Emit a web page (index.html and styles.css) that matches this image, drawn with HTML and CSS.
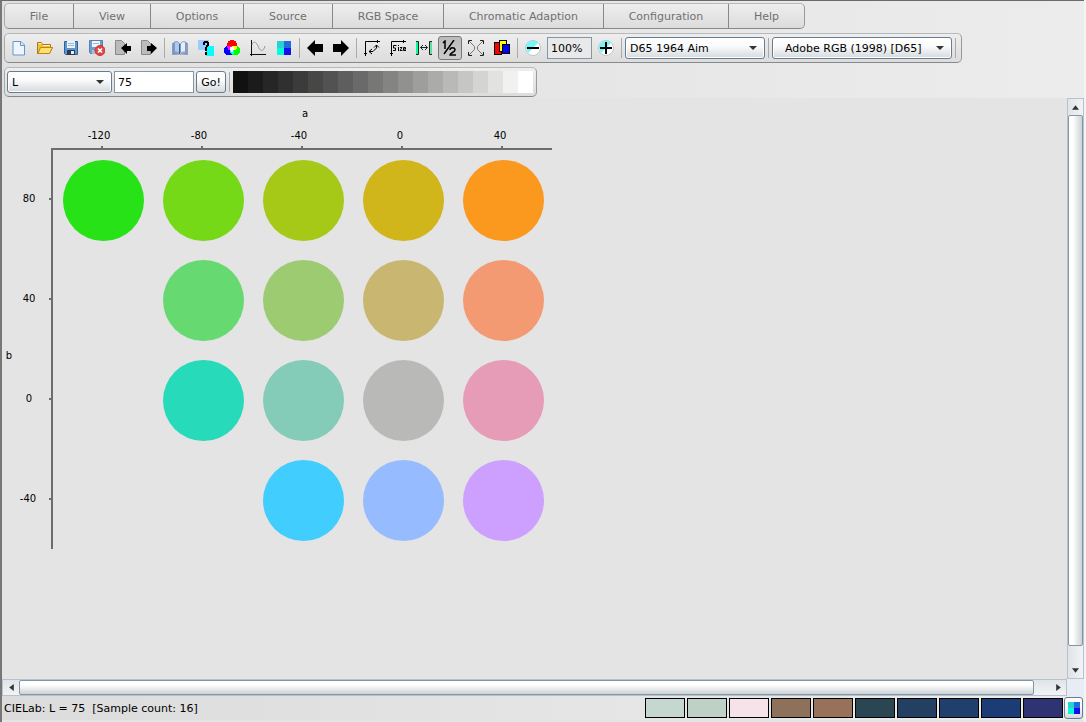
FILE: index.html
```html
<!DOCTYPE html>
<html lang="en">
<head>
<meta charset="utf-8">
<title>CIELab colour samples</title>
<link rel="stylesheet" href="styles.css">
</head>
<body>
<div class="app">
  <header class="header">
    <nav class="panel menubar" aria-label="Main menu">
      <button class="menu">File</button>
      <button class="menu">View</button>
      <button class="menu">Options</button>
      <button class="menu">Source</button>
      <button class="menu">RGB Space</button>
      <button class="menu">Chromatic Adaption</button>
      <button class="menu">Configuration</button>
      <button class="menu">Help</button>
    </nav>
    <div class="panel toolbar" role="toolbar" aria-label="Tools">
      <button class="tool" aria-label="New"><svg viewBox="0 0 16 16"><path d="M2 1.500h8l3.500 3.500v10H2z" fill="#edf6ff" stroke="#6695cd"/><path d="M9.500 1.500v4h4" fill="#cfe4fa" stroke="#6695cd"/></svg></button>
      <button class="tool" aria-label="Open"><svg viewBox="0 0 16 16"><path d="M.500 13.500v-11h4l1 2h8v3h2l-3 6z" fill="#f0c23a" stroke="#ae7716"/><path d="M1 13.500l2.500-6h12l-3 6z" fill="#ffdf70" stroke="#bd861b"/><path d="M1.500 3.500h3M6 5.500h7" stroke="#fff3b5"/></svg></button>
      <button class="tool" aria-label="Save"><svg viewBox="0 0 16 16"><path d="M1.500 1.500h13v13h-12l-1-1z" fill="#5d96d2" stroke="#315f98"/><path d="M4 1h8v7H4z" fill="#eaf4fc"/><path d="M5 3.500h6M5 5.500h6" stroke="#97b9d8"/><path d="M4 10h8v5H4z" fill="#303b48"/><path d="M8 11h3v3H8z" fill="#eee"/></svg></button>
      <button class="tool" aria-label="Delete saved file"><svg viewBox="0 0 16 16"><path d="M.500.500h13v13h-12l-1-1z" fill="#6b9ed5" stroke="#5680b0"/><path d="M3 1h8v6H3z" fill="#edf5fb"/><path d="M4 3.500h6" stroke="#9bb9d5"/><path d="M3 10h5v4H3z" fill="#b4bdc9"/><circle cx="11" cy="10.500" r="5" fill="#df4747" stroke="#c93434"/><path d="M9 8.500l4 4M13 8.500l-4 4" stroke="#fff" stroke-width="1.700"/></svg></button>
      <button class="tool" aria-label="Import"><svg viewBox="0 0 16 16"><path d="M.500.500h6l3 3v11h-9z" fill="#bbb" stroke="#888"/><path d="M6 8l6-5v3h4v5h-4v3z" fill="#000"/></svg></button>
      <button class="tool" aria-label="Export"><svg viewBox="0 0 16 16"><path d="M.500.500h6l3 3v11h-9z" fill="#bbb" stroke="#888"/><path d="M16 8l-6-5v3H6v5h4v3z" fill="#000"/></svg></button>
      <span class="sep"></span>
      <button class="tool" aria-label="Library"><svg viewBox="0 0 16 16"><path d="M.500 3.500l2-1v10l5 1 1 1 1-1 5-1v-10l1 1v11l-6-.500-1 .500-1-.500-7 .500z" fill="#7d92c2" stroke="#8a9cc2"/><path d="M2.500 2c3-1 4 0 5 2v9c-1-1-3-1-5-1z" fill="#a9cdec" stroke="#8198bf"/><path d="M13.500 2c-3-1-4 0-5 2v9c1-1 3-1 5-1z" fill="#e1effa" stroke="#8198bf"/><path d="M7.500 4v10" stroke="#475a8e"/></svg></button>
      <button class="tool" aria-label="Help"><svg viewBox="0 0 16 16" shape-rendering="crispEdges"><path fill="#99ccff" d="M0 0h11v10H0z"/><path fill="#0ff" d="M8 6h8v10H8z"/><path d="M5 2h2v3H5zM6 1h4v2H6zM9 2h2v4H9zM8 5h2v2H8zM7 7h2v4H7zM7 12h2v3H7z"/></svg></button>
      <button class="tool" aria-label="Colour mixer"><svg viewBox="0 0 16 16" shape-rendering="crispEdges"><circle cx="8" cy="5" r="5" fill="#f00"/><circle cx="5" cy="10.500" r="5" fill="#00f"/><circle cx="11" cy="10.500" r="5" fill="#0f0"/><path fill="#f0f" d="M3 6h5v4H4z"/><path fill="#ff0" d="M8 6h5v2l-2 2H8z"/><path fill="#0ff" d="M6 10h4v4H8l-2-2z"/><path fill="#fff" d="M6 7h4v3H9v2H7v-2H6z"/></svg></button>
      <button class="tool" aria-label="Graph"><svg viewBox="0 0 16 16"><path d="M1.500 0v16M0 14.500h16" fill="none" stroke="#111"/><path d="M2 5c1-4 4-4 6 1s5 7 7 0" fill="none" stroke="#999"/></svg></button>
      <button class="tool" aria-label="Samples"><svg viewBox="0 0 16 16" shape-rendering="crispEdges"><path fill="#27d3d0" d="M1 1h7v7H1z"/><path fill="#226cdd" d="M8 1h7v7H8z"/><path fill="#00ffd6" d="M1 8h7v7H1z"/><path fill="#1410ef" d="M8 8h7v7H8z"/></svg></button>
      <span class="sep"></span>
      <button class="tool" aria-label="Previous"><svg viewBox="0 0 16 16"><path d="M0 8l8-8v4h8v8H8v4z"/></svg></button>
      <button class="tool" aria-label="Next"><svg viewBox="0 0 16 16"><path d="M16 8L8 0v4H0v8h8v4z"/></svg></button>
      <span class="sep"></span>
      <button class="tool" aria-label="Rotate axes"><svg viewBox="0 0 16 16" fill="none" stroke="#000"><path d="M1.500 16V1.500H16M13.500 0v3M0 13.500h3M12.500 5v3l-3.500 3.500H5M10 7.500L12.500 5 15 7.500M8 9l-3 2.500L8 14"/></svg></button>
      <button class="tool" aria-label="Size"><svg viewBox="0 0 16 16" fill="none" stroke="#000"><path d="M1.500 16V1.500H16M13.500 0v3M0 13.500h3"/><path d="M6.500 5.500h-3v2.500h2v2.500H3M8.500 5v1M8.500 7v4M10 7.500h2l-2 3h2.500M15.500 9v-1.500h-2v3H16M14 9h2"/></svg></button>
      <button class="tool" aria-label="Spacing"><svg viewBox="0 0 16 16" fill="none"><path fill="#00ff97" d="M0 1h2v14H0z"/><path fill="#69d9a5" d="M14 1h2v14h-2z"/><path d="M0 1.500h2.500v13H0M16 1.500h-2.500v13H16M4.500 7.500h7M7 5L4.500 7.500 7 10M9 5l2.500 2.500L9 10" stroke="#222"/></svg></button>
      <button class="tool pressed" aria-label="Half step" aria-pressed="true"><svg viewBox="0 0 16 16" fill="none" stroke="#000" stroke-width="1.500"><path d="M1 3l2-2v8M12 0L2 14M8 10c0-3 5-3 5 0 0 2-5 3-5 5h6"/></svg></button>
      <button class="tool" aria-label="Fit"><svg viewBox="0 0 16 16" fill="none" stroke="#777"><path d="M1 1l5.500 5.500v3L1 15M15 1L9.500 6.500v3L15 15"/><path d="M.500 4V.500H4M12 .500h3.500V4M.500 12v3.500H4M12 15.500h3.500V12" stroke="#222"/></svg></button>
      <button class="tool" aria-label="Layers"><svg viewBox="0 0 16 16" stroke="#000" shape-rendering="crispEdges"><path fill="red" d="M.500 2.500h7v12h-7z"/><path fill="#ff0" d="M5.500.500h7v11h-7z"/><path fill="#00f" d="M8.500 4.500h7v9h-7z"/></svg></button>
      <span class="sep"></span>
      <button class="tool" aria-label="Zoom out"><svg viewBox="0 0 16 16"><circle cx="8" cy="8" r="7.500" fill="#fff" stroke="#bfc5c7"/><path d="M1 8a7 7 0 0 1 12-5L3 13z" fill="#73f9fb"/><path d="M2 7h12v2H2z"/></svg></button>
      <input class="field zoom" aria-label="Zoom level" value="100%">
      <button class="tool" aria-label="Zoom in"><svg viewBox="0 0 16 16"><circle cx="8" cy="8" r="7.500" fill="#fff" stroke="#bfc5c7"/><path d="M1 8a7 7 0 0 1 12-5L3 13z" fill="#73f9fb"/><path d="M2 7h5V2h2v5h5v2H9v5H7V9H2z"/></svg></button>
      <span class="sep"></span>
      <span class="combo illuminant"><select aria-label="Illuminant"><option>D65 1964 Aim</option></select></span>
      <span class="sep"></span>
      <span class="combo space"><select aria-label="RGB space"><option>Adobe RGB (1998) [D65]</option></select></span>
      <span class="sep"></span>
    </div>
    <div class="panel toolbar">
      <span class="combo axis"><select aria-label="Axis"><option>L</option></select></span>
      <input class="field level" aria-label="Level" value="75">
      <button class="push go">Go!</button>
      <span class="sep"></span>
      <div class="ramp" role="img" aria-label="Lightness ramp">
        <i style="background:#111"></i><i style="background:#1b1b1b"></i><i style="background:#262625"></i><i style="background:#303030"></i><i style="background:#3b3b3b"></i><i style="background:#474745"></i><i style="background:#525252"></i><i style="background:#5e5e5e"></i><i style="background:#6a6a6a"></i><i style="background:#777775"></i><i style="background:#848482"></i><i style="background:#919190"></i><i style="background:#9e9e9c"></i><i style="background:#ababa9"></i><i style="background:#b9b9b7"></i><i style="background:#c6c6c4"></i><i style="background:#d4d4d2"></i><i style="background:#e2e2e0"></i><i style="background:#f1f1ef"></i><i style="background:#fff"></i>
      </div>
    </div>
  </header>

  <main class="view">
    <div class="canvas">
      <svg class="chart" width="560" height="460" viewBox="0 0 560 460" role="img" aria-label="Samples by a and b">
        <g class="axes">
          <path d="M50 451V51H550"/>
          <path d="M100 48v3M200 48v3M300 48v3M400 48v3M500 48v3M47 101h3M47 201h3M47 301h3M47 401h3"/>
        </g>
        <g class="labels">
          <text x="303" y="19">a</text>
          <text x="97" y="41">-120</text><text x="197" y="41">-80</text><text x="297" y="41">-40</text><text x="398" y="41">0</text><text x="498" y="41">40</text>
          <text x="27" y="104">80</text><text x="27" y="204">40</text><text x="27" y="304">0</text><text x="26" y="404">-40</text>
          <text x="7" y="261">b</text>
        </g>
        <circle cx="101.500" cy="102.500" r="40.500" fill="#27e217"/>
        <circle cx="201.500" cy="102.500" r="40.500" fill="#76d917"/>
        <circle cx="301.500" cy="102.500" r="40.500" fill="#a6c917"/>
        <circle cx="401.500" cy="102.500" r="40.500" fill="#d0b51b"/>
        <circle cx="501.500" cy="102.500" r="40.500" fill="#fb981e"/>
        <circle cx="201.500" cy="202.500" r="40.500" fill="#66da71"/>
        <circle cx="301.500" cy="202.500" r="40.500" fill="#9ccb72"/>
        <circle cx="401.500" cy="202.500" r="40.500" fill="#c9b671"/>
        <circle cx="501.500" cy="202.500" r="40.500" fill="#f49a72"/>
        <circle cx="201.500" cy="302.500" r="40.500" fill="#27dab9"/>
        <circle cx="301.500" cy="302.500" r="40.500" fill="#84ccb8"/>
        <circle cx="401.500" cy="302.500" r="40.500" fill="#b9b9b7"/>
        <circle cx="501.500" cy="302.500" r="40.500" fill="#e69cb7"/>
        <circle cx="301.500" cy="402.500" r="40.500" fill="#41ceff"/>
        <circle cx="401.500" cy="402.500" r="40.500" fill="#97bbff"/>
        <circle cx="501.500" cy="402.500" r="40.500" fill="#cd9fff"/>
      </svg>
    </div>
    <div class="scroll vertical">
      <button class="arrow" aria-label="Scroll up"><svg viewBox="0 0 6 6"><path d="M0 5l3-4 3 4z"/></svg></button>
      <div class="thumb"></div>
      <button class="arrow" aria-label="Scroll down"><svg viewBox="0 0 6 6"><path d="M0 1l3 4 3-4z"/></svg></button>
    </div>
    <div class="scroll horizontal">
      <button class="arrow" aria-label="Scroll left"><svg viewBox="0 0 6 6"><path d="M5 0L1 3l4 3z"/></svg></button>
      <div class="thumb"></div>
      <button class="arrow" aria-label="Scroll right"><svg viewBox="0 0 6 6"><path d="M1 0l4 3-4 3z"/></svg></button>
    </div>
    <div class="corner"></div>
  </main>

  <footer class="status">
    <span class="message">CIELab: L = 75&nbsp; [Sample count: 16]</span>
    <div class="history">
      <button aria-label="Colour 1" style="background:#c4d8d0"></button>
      <button aria-label="Colour 2" style="background:#bdd1c7"></button>
      <button aria-label="Colour 3" style="background:#f8e2ea"></button>
      <button aria-label="Colour 4" style="background:#8e715b"></button>
      <button aria-label="Colour 5" style="background:#98715b"></button>
      <button aria-label="Colour 6" style="background:#2b4653"></button>
      <button aria-label="Colour 7" style="background:#234063"></button>
      <button aria-label="Colour 8" style="background:#203f6d"></button>
      <button aria-label="Colour 9" style="background:#1c3c75"></button>
      <button aria-label="Colour 10" style="background:#303372"></button>
    </div>
    <button class="push samples" aria-label="Samples"><svg viewBox="0 0 12 12" shape-rendering="crispEdges"><path fill="#27d3d0" d="M0 0h6v6H0z"/><path fill="#226cdd" d="M6 0h6v6H6z"/><path fill="#00ffd6" d="M0 6h6v6H0z"/><path fill="#1410ef" d="M6 6h6v6H6z"/></svg></button>
  </footer>
</div>
</body>
</html>
```
FILE: styles.css
```css
* { box-sizing: border-box; }

body {
  margin: 0;
  background: #f4f4f4;
  color: #000;
  font: 11px "DejaVu Sans", Verdana, sans-serif;
}

button, input, select { font: inherit; color: inherit; margin: 0; }
button { padding: 0; }

.app {
  display: flex;
  flex-direction: column;
  height: 100vh;
  margin-right: 2px;
  padding-bottom: 2px;
  border-top: 1px solid #6b696b;
  border-left: 2px solid #777;
  background: #e4e4e4;
}

.header {
  display: flex;
  flex-direction: column;
  align-items: flex-start;
  gap: 4px;
  padding: 2px 2px 1px;
  background: linear-gradient(90deg, #e0e0e0, #ececec);
}

.panel {
  border: 1px solid;
  border-color: #b8b8b8 #999 #888 #aaa;
  border-radius: 5px;
  background: linear-gradient(#eee, #dcdcdc);
}

.menubar {
  display: grid;
  grid-template-columns: 69px 77px 93px 89px 111px 160px 125px 75px;
  height: 26px;
}

.menu {
  border: 0;
  border-right: 1px solid #888;
  background: none;
  color: #707070;
}

.menu:last-child { border-right: 0; }

.toolbar {
  display: flex;
  align-items: center;
  height: 30px;
  padding: 0 3px 0 1px;
}

.tool {
  display: flex;
  align-items: center;
  justify-content: center;
  width: 26px;
  height: 24px;
  border: 1px solid transparent;
  background: none;
}

.tool svg { flex: none; width: 16px; height: 16px; }

.pressed {
  width: 24px;
  margin: 0 1px;
  border-color: #777;
  border-radius: 3px;
  background: linear-gradient(#bbb, #ccc);
}

.sep {
  width: 1px;
  height: 20px;
  margin: 0 2px;
  background: #aaa;
}

.field {
  height: 22px;
  padding: 0 3px;
  border: 1px solid #8496a8;
}

.zoom { width: 45px; margin: 0 1px; background: #e9e9e9; }
.level { width: 80px; margin: 0 2px 0 1px; background: #fff; }

.combo { position: relative; height: 22px; margin: 0 1px; }

.combo select {
  appearance: none;
  width: 100%;
  height: 100%;
  padding: 0 4px;
  border: 1px solid #647d92;
  border-radius: 3px;
  background: linear-gradient(#fff, #fafbfc 40%, #d5dade);
  box-shadow: inset 0 0 0 1px #fff;
}

.combo::after {
  content: "";
  position: absolute;
  top: 9px;
  right: 8px;
  border: 4px solid transparent;
  border-top-color: #333;
  border-bottom: 0;
  pointer-events: none;
}

.illuminant { width: 140px; }
.space { width: 180px; }
.combo.space select { padding-left: 12px; }
.axis { width: 105px; }

.push {
  height: 22px;
  border: 1px solid #647d92;
  border-radius: 3px;
  background: linear-gradient(#fff, #fafbfc 40%, #d5dade);
}

.go { width: 30px; margin-right: 1px; }

.ramp { display: flex; height: 22px; margin-left: 1px; }
.ramp i { width: 15px; }

.view {
  flex: 1;
  display: grid;
  grid-template: minmax(0, 1fr) 17px / minmax(0, 1fr) 17px;
  min-height: 0;
}

.canvas { overflow: hidden; }
.chart { display: block; }
.axes { fill: none; stroke: #6d6d6d; stroke-width: 2px; }

.labels {
  font: 10px "DejaVu Sans", Verdana, sans-serif;
  text-anchor: middle;
}

.scroll {
  display: flex;
  border: 1px solid #b8c2cc;
}

.vertical {
  flex-direction: column;
  background: linear-gradient(90deg, #dfe4e9, #f1f4f6);
}

.horizontal {
  background: linear-gradient(#dfe4e9, #f1f4f6);
}

.arrow {
  display: flex;
  align-items: center;
  justify-content: center;
  flex: 0 0 16px;
  border: 0;
  background: none;
}

.arrow svg { width: 7px; height: 7px; fill: #333; }

.thumb {
  flex: 1;
  border: 1px solid #8396a6;
  border-radius: 2px;
}

.vertical .thumb {
  margin-bottom: 16px;
  background: linear-gradient(90deg, #fff 30%, #ccd2d5);
}

.horizontal .thumb {
  margin-right: 16px;
  background: linear-gradient(#fff 30%, #ccd2d5);
}

.corner { background: #e8edf5; }

.status {
  display: flex;
  align-items: center;
  height: 24px;
  padding: 0 1px 0 2px;
  background: linear-gradient(90deg, #dcdcdc, #ececec);
}

.message { flex: 1; white-space: pre; }

.history { display: flex; gap: 2px; }

.history button {
  width: 40px;
  height: 20px;
  border: 1px solid #000;
}

.samples {
  display: flex;
  align-items: center;
  justify-content: center;
  width: 19px;
  margin-left: 1px;
}

.samples svg { flex: none; width: 12px; height: 12px; }
```
